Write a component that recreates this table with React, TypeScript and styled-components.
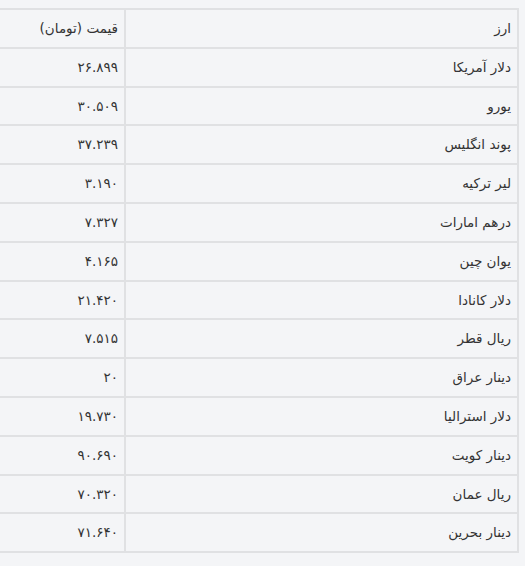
import React from "react";
import styled, { createGlobalStyle } from "styled-components";

const GlobalStyle = createGlobalStyle`
  html, body {
    margin: 0;
    padding: 0;
    background: #f4f5f7;
    overflow: hidden;
  }
`;

const Page = styled.div`
  direction: rtl;
  padding: 8px 6px 0 0;
  width: 525px;
  height: 566px;
  box-sizing: border-box;
  overflow: hidden;
  background: #f4f5f7;
`;

const Table = styled.table`
  border-collapse: collapse;
  width: 540px;
  font-family: "DejaVu Sans", "Noto Sans", sans-serif;
  font-size: 13.5px;
  color: #333;
`;

const Cell = styled.td<{ $name?: boolean }>`
  border: 2px solid #e0e1e3;
  padding: 8px 6px 8px 6px;
  height: 20.8px;
  line-height: 20.8px;
  text-align: right;
  width: ${(p) => (p.$name ? "379px" : "auto")};
`;

const rates: [string, string][] = [
  ["دلار آمریکا", "۲۶.۸۹۹"],
  ["یورو", "۳۰.۵۰۹"],
  ["پوند انگلیس", "۳۷.۲۳۹"],
  ["لیر ترکیه", "۳.۱۹۰"],
  ["درهم امارات", "۷.۳۲۷"],
  ["یوان چین", "۴.۱۶۵"],
  ["دلار کانادا", "۲۱.۴۲۰"],
  ["ریال قطر", "۷.۵۱۵"],
  ["دینار عراق", "۲۰"],
  ["دلار استرالیا", "۱۹.۷۳۰"],
  ["دینار کویت", "۹۰.۶۹۰"],
  ["ریال عمان", "۷۰.۳۲۰"],
  ["دینار بحرین", "۷۱.۶۴۰"],
];

const App = () => {
  return (
    <Page>
      <GlobalStyle />
      <Table>
        <tbody>
          <tr>
            <Cell $name>ارز</Cell>
            <Cell>قیمت (تومان)</Cell>
          </tr>
          {rates.map(([name, price]) => (
            <tr key={name}>
              <Cell $name>{name}</Cell>
              <Cell>{price}</Cell>
            </tr>
          ))}
        </tbody>
      </Table>
    </Page>
  );
};

export default App;
